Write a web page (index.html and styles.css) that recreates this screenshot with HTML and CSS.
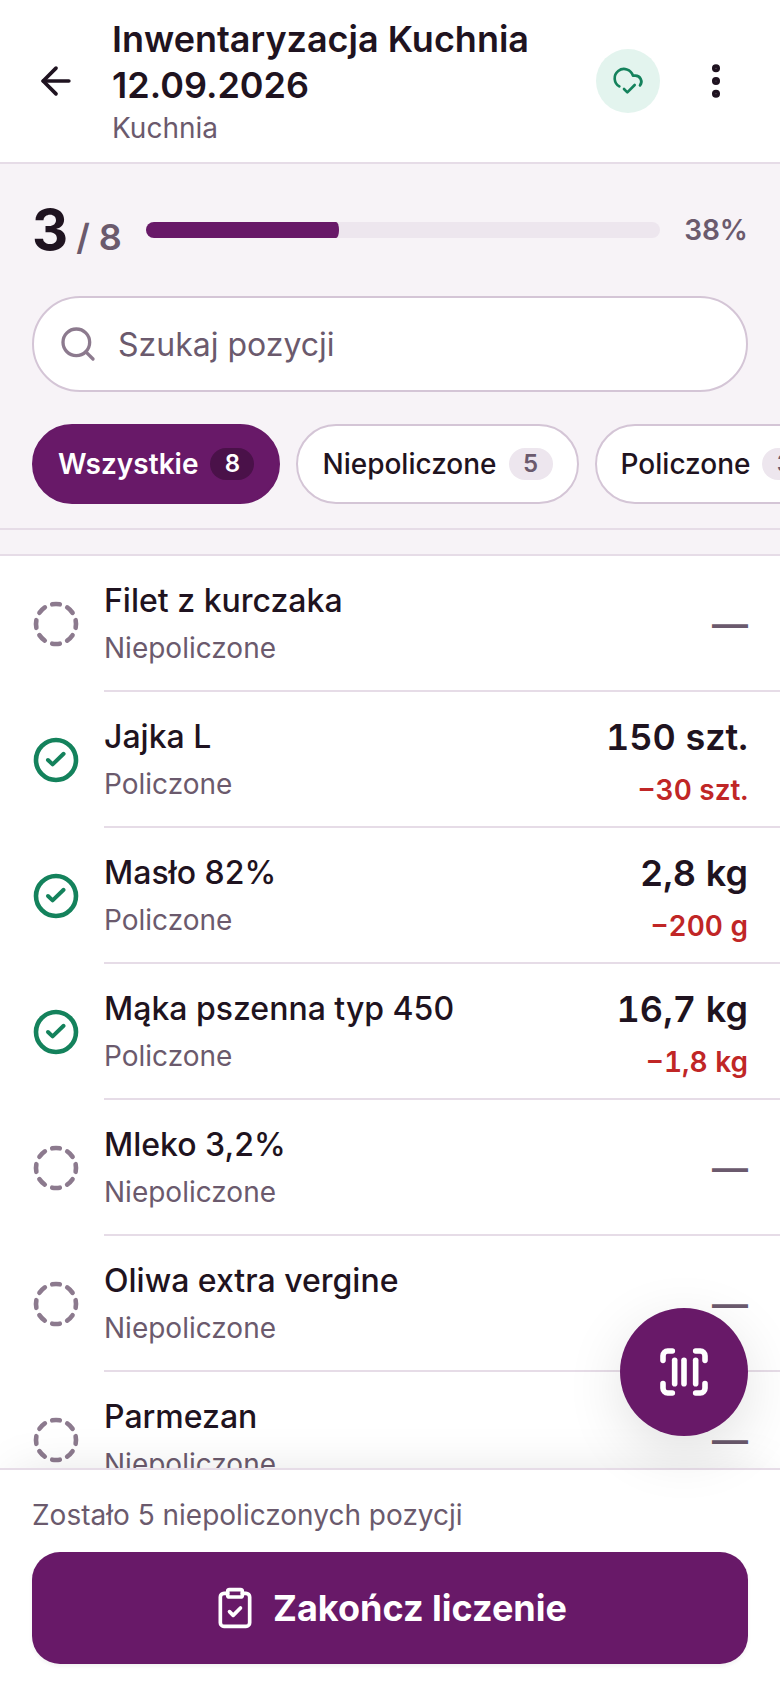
FILE: index.html
```
<!DOCTYPE html>
<html lang="pl">
<head>
    <meta charset="UTF-8">
    <meta name="viewport" content="width=device-width, initial-scale=1.0">
    <title>Inwentaryzacja Kuchnia</title>
    <link rel="stylesheet" href="styles.css">
</head>
<body>

<!-- Wspólne ikony statusu pozycji -->
<svg class="sprite" aria-hidden="true">
    <symbol id="icon-open" viewBox="0 0 24 24">
        <path d="M10.1 2.182a10 10 0 0 1 3.8 0"/>
        <path d="M13.9 21.818a10 10 0 0 1-3.8 0"/>
        <path d="M17.609 3.721a10 10 0 0 1 2.69 2.7"/>
        <path d="M2.182 13.9a10 10 0 0 1 0-3.8"/>
        <path d="M20.279 17.609a10 10 0 0 1-2.7 2.69"/>
        <path d="M21.818 10.1a10 10 0 0 1 0 3.8"/>
        <path d="M3.721 6.391a10 10 0 0 1 2.7-2.69"/>
        <path d="M6.391 20.279a10 10 0 0 1-2.69-2.7"/>
    </symbol>
    <symbol id="icon-done" viewBox="0 0 24 24">
        <circle cx="12" cy="12" r="10"/>
        <path stroke-width="2" d="M8 12l2.3 2.2 5.5-5.3"/>
    </symbol>
</svg>

<header class="topbar">
    <button type="button" class="icon-btn" aria-label="Wstecz">
        <svg class="icon icon-md" viewBox="0 0 24 24"><path d="m12 19-7-7 7-7"/><path d="M19 12H5"/></svg>
    </button>
    <div class="topbar-text">
        <h1>Inwentaryzacja Kuchnia 12.09.2026</h1>
        <p>Kuchnia</p>
    </div>
    <span class="sync">
        <svg class="icon icon-xs" viewBox="0 0 24 24"><path d="m17 15-5.5 5.5L9 18"/><path d="M5.516 16.07A7 7 0 1 1 15.71 8h1.79a4.5 4.5 0 0 1 3.501 7.327"/></svg>
    </span>
    <button type="button" class="icon-btn" aria-label="Menu">
        <svg class="icon icon-md dots" viewBox="0 0 24 24"><circle cx="12" cy="5" r="1"/><circle cx="12" cy="12" r="1"/><circle cx="12" cy="19" r="1"/></svg>
    </button>
</header>

<section class="tools">
    <div class="progress">
        <div class="progress-count"><strong>3</strong><span>/ 8</span></div>
        <div class="progress-track">
            <div class="progress-fill" style="width: 37.5%"></div>
        </div>
        <span class="progress-percent">38%</span>
    </div>

    <label class="search">
        <svg class="icon icon-sm" viewBox="0 0 24 24"><circle cx="11" cy="11" r="8"/><path d="m21 21-4.3-4.3"/></svg>
        <input type="text" placeholder="Szukaj pozycji" aria-label="Szukaj pozycji">
    </label>

    <div class="filters">
        <button type="button" class="chip active">Wszystkie <span class="chip-count">8</span></button>
        <button type="button" class="chip">Niepoliczone <span class="chip-count">5</span></button>
        <button type="button" class="chip">Policzone <span class="chip-count">3</span></button>
    </div>
</section>

<main class="content">
    <ul class="items">
        <li class="item">
            <svg class="icon status"><use href="#icon-open"/></svg>
            <div class="item-body">
                <div class="item-text"><h2>Filet z kurczaka</h2><p>Niepoliczone</p></div>
                <span class="empty">—</span>
            </div>
        </li>
        <li class="item">
            <svg class="icon status done"><use href="#icon-done"/></svg>
            <div class="item-body">
                <div class="item-text"><h2>Jajka L</h2><p>Policzone</p></div>
                <div class="item-qty"><strong>150 szt.</strong><span>−30 szt.</span></div>
            </div>
        </li>
        <li class="item">
            <svg class="icon status done"><use href="#icon-done"/></svg>
            <div class="item-body">
                <div class="item-text"><h2>Masło 82%</h2><p>Policzone</p></div>
                <div class="item-qty"><strong>2,8 kg</strong><span>−200 g</span></div>
            </div>
        </li>
        <li class="item">
            <svg class="icon status done"><use href="#icon-done"/></svg>
            <div class="item-body">
                <div class="item-text"><h2>Mąka pszenna typ 450</h2><p>Policzone</p></div>
                <div class="item-qty"><strong>16,7 kg</strong><span>−1,8 kg</span></div>
            </div>
        </li>
        <li class="item">
            <svg class="icon status"><use href="#icon-open"/></svg>
            <div class="item-body">
                <div class="item-text"><h2>Mleko 3,2%</h2><p>Niepoliczone</p></div>
                <span class="empty">—</span>
            </div>
        </li>
        <li class="item">
            <svg class="icon status"><use href="#icon-open"/></svg>
            <div class="item-body">
                <div class="item-text"><h2>Oliwa extra vergine</h2><p>Niepoliczone</p></div>
                <span class="empty">—</span>
            </div>
        </li>
        <li class="item">
            <svg class="icon status"><use href="#icon-open"/></svg>
            <div class="item-body">
                <div class="item-text"><h2>Parmezan</h2><p>Niepoliczone</p></div>
                <span class="empty">—</span>
            </div>
        </li>
    </ul>
</main>

<footer class="bottom">
    <button type="button" class="fab" aria-label="Skanuj kod">
        <svg class="icon icon-lg" viewBox="0 0 24 24"><path d="M3 7V5a2 2 0 0 1 2-2h2"/><path d="M17 3h2a2 2 0 0 1 2 2v2"/><path d="M21 17v2a2 2 0 0 1-2 2h-2"/><path d="M7 21H5a2 2 0 0 1-2-2v-2"/><path d="M8 7v10"/><path d="M12 7v10"/><path d="M17 7v10"/></svg>
    </button>
    <p>Zostało 5 niepoliczonych pozycji</p>
    <button type="button" class="finish">
        <svg class="icon icon-md" viewBox="0 0 24 24"><rect x="8" y="2" width="8" height="4" rx="1"/><path d="M16 4h2a2 2 0 0 1 2 2v14a2 2 0 0 1-2 2H6a2 2 0 0 1-2-2V6a2 2 0 0 1 2-2h2"/><path d="m9 14 2 2 4-4"/></svg>
        Zakończ liczenie
    </button>
</footer>

</body>
</html>
```
FILE: styles.css
```
* {
    box-sizing: border-box;
}
body {
    font-family: Inter, "Liberation Sans", sans-serif;
    background-color: #f7f3f7;
    color: #1f1320;
    margin: 0;
    height: 100vh;
    display: flex;
    flex-direction: column;
}
h1, h2, p, ul {
    margin: 0;
    padding: 0;
}
button {
    font-family: inherit;
    color: inherit;
    border: none;
    padding: 0;
    cursor: pointer;
}
.sprite {
    display: none;
}

/* Ikony */
.icon {
    flex: none;
    fill: none;
    stroke: currentColor;
    stroke-width: 2;
    stroke-linecap: round;
    stroke-linejoin: round;
}
.icon-xs {
    width: 32px;
    height: 32px;
}
.icon-sm {
    width: 40px;
    height: 40px;
}
.icon-md {
    width: 44px;
    height: 44px;
}
.icon-lg {
    width: 56px;
    height: 56px;
    stroke-width: 2.4;
}
.dots {
    stroke-width: 2.4;
}

/* Nagłówek */
.topbar {
    display: flex;
    align-items: center;
    gap: 8px;
    padding: 16px 16px 16px 8px;
    background-color: #fff;
    border-bottom: 2px solid #e6dce7;
}
.icon-btn {
    display: flex;
    align-items: center;
    justify-content: center;
    width: 96px;
    height: 96px;
    background: none;
}
.topbar-text {
    flex: 1;
}
.topbar h1 {
    font-size: 36px;
    line-height: 46px;
    font-weight: 600;
}
.topbar p {
    margin-top: 2px;
    font-size: 28px;
    line-height: 36px;
    color: #6b5a6d;
}
.sync {
    display: flex;
    align-items: center;
    justify-content: center;
    width: 64px;
    height: 64px;
    border-radius: 50%;
    background-color: #e3f4ee;
    color: #14825c;
}

/* Postęp, szukanie, filtry */
.tools {
    display: flex;
    flex-direction: column;
    gap: 32px;
    padding: 32px 32px 24px;
    border-bottom: 2px solid #e6dce7;
}
.progress {
    display: flex;
    align-items: center;
    gap: 24px;
    font-weight: 600;
    color: #6b5a6d;
}
.progress-count {
    display: flex;
    align-items: baseline;
    gap: 8px;
    font-size: 36px;
    line-height: 44px;
}
.progress-count strong {
    font-size: 56px;
    line-height: 68px;
    font-weight: 700;
    color: #1f1320;
}
.progress-track {
    flex: 1;
    height: 16px;
    border-radius: 8px;
    background-color: #ede6ee;
    overflow: hidden;
}
.progress-fill {
    height: 100%;
    border-radius: 0 3px 3px 0 / 0 8px 8px 0;
    background-color: #681968;
}
.progress-percent {
    font-size: 28px;
}
.search {
    display: flex;
    align-items: center;
    gap: 20px;
    height: 96px;
    padding: 0 24px;
    border: 2px solid #d4c5d6;
    border-radius: 48px;
    background-color: #fff;
    color: #8c7a8e;
}
.search input {
    flex: 1;
    min-width: 0;
    padding: 0;
    border: none;
    outline: none;
    background: none;
    font-family: inherit;
    font-size: 32px;
    color: #1f1320;
}
.search input::placeholder {
    color: #6b5a6d;
}
.filters {
    display: flex;
    gap: 16px;
    margin-right: -32px;
    overflow: hidden;
}
.chip {
    flex: none;
    display: flex;
    align-items: center;
    gap: 12px;
    height: 80px;
    padding: 0 24px;
    border: 2px solid #d4c5d6;
    border-radius: 40px;
    background-color: #fff;
    font-size: 28px;
    font-weight: 500;
}
.chip-count {
    min-width: 44px;
    border-radius: 16px;
    background-color: #ede6ee;
    color: #6b5a6d;
    font-size: 24px;
    line-height: 32px;
    font-weight: 600;
    text-align: center;
}
.chip.active {
    background-color: #681968;
    border-color: #681968;
    color: #fff;
    font-weight: 600;
}
.chip.active .chip-count {
    background-color: #4a1149;
    color: #fff;
}

/* Lista pozycji */
.content {
    flex: 1;
    min-height: 0;
    padding-top: 24px;
    overflow: hidden;
}
.items {
    list-style: none;
    background-color: #fff;
    border-top: 2px solid #e6dce7;
}
.item {
    display: flex;
    align-items: center;
    gap: 24px;
    padding-left: 32px;
}
.status {
    width: 48px;
    height: 48px;
    stroke-width: 2.3;
    color: #8c7a8e;
}
.status.done {
    color: #14825c;
}
.item-body {
    flex: 1;
    display: flex;
    align-items: center;
    justify-content: space-between;
    min-height: 136px;
    padding-right: 32px;
    box-shadow: inset 0 -2px #e6dce7;
}
.item-text {
    display: flex;
    flex-direction: column;
    gap: 2px;
}
.item h2 {
    font-size: 32px;
    line-height: 46px;
    font-weight: 500;
}
.item p {
    font-size: 28px;
    line-height: 44px;
    color: #6b5a6d;
}
.item-qty {
    display: flex;
    flex-direction: column;
    gap: 4px;
    text-align: right;
    font-weight: 600;
    font-variant-numeric: tabular-nums;
}
.item-qty strong {
    font-size: 36px;
    line-height: 56px;
    font-weight: 600;
}
.item-qty span {
    font-size: 28px;
    line-height: 42px;
    color: #c02626;
}
.empty {
    font-size: 36px;
    font-weight: 600;
    color: #6b5a6d;
}

/* Dolny pasek */
.bottom {
    position: relative;
    padding: 24px 32px;
    background-color: #fff;
    border-top: 2px solid #e6dce7;
    box-shadow: 0 -8px 48px -16px rgba(0, 0, 0, 0.13);
}
.bottom p {
    font-size: 28px;
    line-height: 42px;
    margin-bottom: 16px;
    color: #6b5a6d;
}
.finish {
    display: flex;
    align-items: center;
    justify-content: center;
    gap: 16px;
    width: 100%;
    height: 112px;
    border-radius: 28px;
    background-color: #681968;
    color: #fff;
    font-size: 36px;
    font-weight: 700;
    box-shadow: 0 2px 4px rgba(0, 0, 0, 0.06);
}
.fab {
    position: absolute;
    right: 32px;
    bottom: calc(100% + 34px);
    display: flex;
    align-items: center;
    justify-content: center;
    width: 128px;
    height: 128px;
    border-radius: 50%;
    background-color: #681968;
    color: #fff;
    box-shadow: 0 16px 64px -8px rgba(0, 0, 0, 0.16);
}
```
